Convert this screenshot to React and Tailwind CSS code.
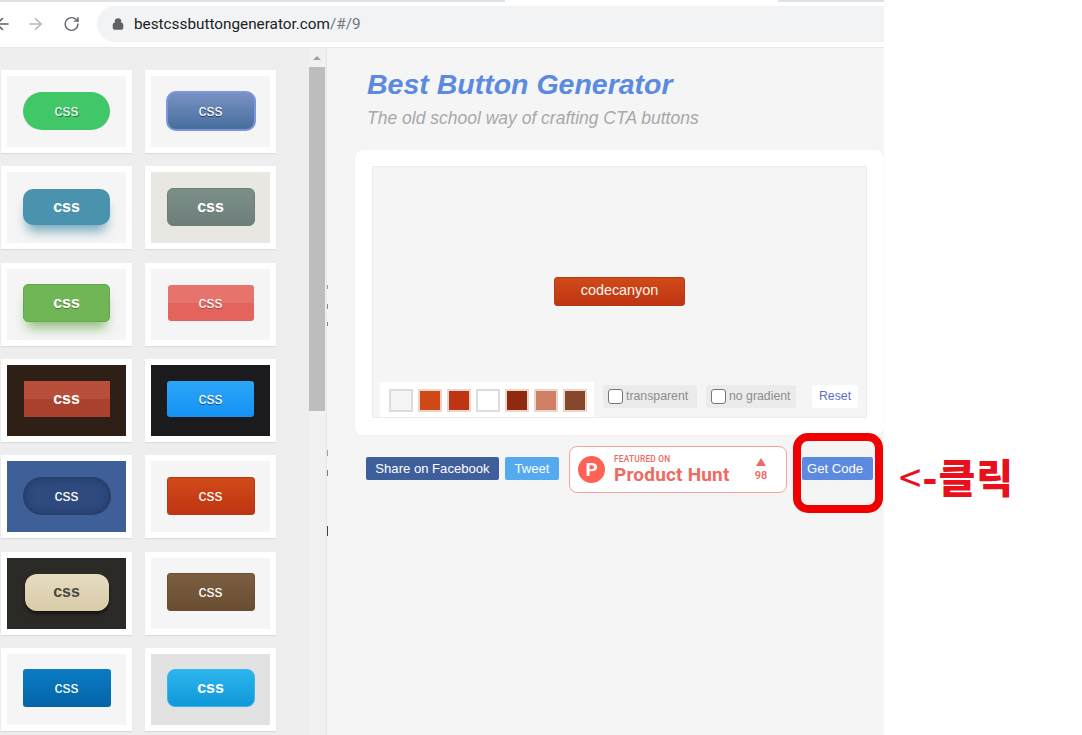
import { ArrowLeft, ArrowRight, RotateCw, Lock } from "lucide-react";

const presets = [
  { bg: "bg-[#f5f5f5]", btn: "w-[87px] h-[38px] rounded-[19px] bg-[#41c768]", text: "text-[#f4fff6] [text-shadow:1px_1px_0_#1e7a3c]" },
  { bg: "bg-[#f5f5f5]", btn: "w-[90px] h-[40px] rounded-[10px] border-2 border-[#7f93de] bg-linear-to-b from-[#7892c2] to-[#476e9e]", text: "text-white [text-shadow:0_1px_0_#283966]" },
  { bg: "bg-[#f5f5f5]", btn: "w-[87px] h-[36px] rounded-[10px] bg-[#4a93ae] shadow-[0_10px_12px_-4px_rgba(45,125,155,0.65)]", text: "font-bold text-white" },
  { bg: "bg-[#e9e7e1]", btn: "w-[88px] h-[38px] rounded-[6px] border border-[#6c7f79] bg-linear-to-b from-[#7b8f89] to-[#6e7f7b]", text: "font-bold text-white" },
  { bg: "bg-[#f5f5f5]", btn: "w-[87px] h-[38px] rounded-[5px] border border-[#63a84e] bg-[#71b656] shadow-[0_10px_12px_-4px_rgba(90,160,60,0.65)]", text: "font-bold text-white [text-shadow:0_1px_0_#4a7d34]" },
  { bg: "bg-[#f5f5f5]", btn: "w-[86px] h-[36px] rounded-[3px] bg-linear-to-b from-[#e6736c] from-50% to-[#e3645d] to-50%", text: "text-white [text-shadow:0_1px_0_#a8433d]" },
  { bg: "bg-[#2e2017]", btn: "w-[86px] h-[36px] bg-linear-to-b from-[#b84f3b] from-50% to-[#a9412c] to-50%", text: "font-bold text-white" },
  { bg: "bg-[#1b1b1d]", btn: "w-[87px] h-[36px] rounded-[3px] bg-linear-to-b from-[#2ba6f7] to-[#1492f5]", text: "text-white [text-shadow:0_1px_0_#0a4f8a]" },
  { bg: "bg-[#3e5f97]", btn: "w-[88px] h-[38px] rounded-[19px] bg-[#2f4a7e] shadow-[inset_0_0_10px_rgba(20,35,70,0.6)]", text: "text-white" },
  { bg: "bg-[#f5f5f5]", btn: "w-[88px] h-[38px] rounded-[3px] border border-[#b93a14] bg-linear-to-b from-[#d04a18] to-[#bf3412]", text: "text-white" },
  { bg: "bg-[#2b2a26]", btn: "w-[84px] h-[37px] rounded-[12px] bg-linear-to-b from-[#e6dcc0] to-[#d8cba8] shadow-[0_3px_3px_rgba(0,0,0,0.5)]", text: "font-bold text-[#4a4a42]" },
  { bg: "bg-[#f5f5f5]", btn: "w-[88px] h-[38px] rounded-[3px] border border-[#6b4f35] bg-linear-to-b from-[#7c5e40] to-[#6a4e33]", text: "text-white" },
  { bg: "bg-[#f5f5f5]", btn: "w-[88px] h-[38px] rounded-[3px] bg-linear-to-b from-[#0a7cc4] to-[#0464a8]", text: "text-white" },
  { bg: "bg-[#e2e2e2]", btn: "w-[88px] h-[38px] rounded-[8px] border border-[#3ab6ea] bg-linear-to-b from-[#2cb5ee] to-[#0e98d8]", text: "font-bold text-white" },
];

const swatches = [
  "bg-[#f5f5f5] border-[#dcdcdc]",
  "bg-[#d04a18] border-[#ecd5cb]",
  "bg-[#bf3412] border-[#ecd5cb]",
  "bg-white border-[#dcdcdc]",
  "bg-[#8f2a10] border-[#ecd5cb]",
  "bg-[#cf7f66] border-[#ecd5cb]",
  "bg-[#87472c] border-[#ecd5cb]",
];

function Toolbar() {
  return (
    <div className="h-[47px] bg-white shrink-0 flex flex-col">
      {/* edge of the tab strip, the active tab leaves a gap */}
      <div className="h-[2px] flex shrink-0">
        <div className="w-[505px] bg-[#dfe1e5]" />
        <div className="w-[273px]" />
        <div className="flex-1 bg-[#dfe1e5]" />
      </div>
      <div className="flex items-center pt-[4px] h-[40px]">
        <div className="flex items-center w-[87px] shrink-0 -ml-[7px] text-[#5f6368]">
          <ArrowLeft size={20} strokeWidth={2} />
          <ArrowRight size={20} strokeWidth={2} className="ml-[14px] text-[#b4b7bb]" />
          <RotateCw size={18} strokeWidth={2} className="ml-[18px]" />
        </div>
        <div className="flex-1 ml-[17px] h-[36px] rounded-l-[18px] bg-[#f1f3f4] flex items-center pl-[15px] gap-[10px]">
          <Lock size={12} strokeWidth={3} className="text-[#5f6368] fill-[#5f6368]" />
          <span className="font-['Roboto',sans-serif] text-[15.3px] text-[#202124]">
            bestcssbuttongenerator.com<span className="text-[#70757a]">/#/9</span>
          </span>
        </div>
      </div>
    </div>
  );
}

function Sidebar() {
  return (
    <div className="w-[327px] shrink-0 flex bg-[#eeeeee] border-r border-[#e8e8e8] overflow-hidden font-['Liberation_Sans',sans-serif]">
      <div className="w-[309px] shrink-0 pt-[22px] pl-[1px]">
        <div className="grid grid-cols-[131px_131px] gap-x-[13px] gap-y-[13.33px]">
          {presets.map((p, i) => (
            <div key={i} className="h-[83px] bg-white p-[6px] shadow-[0_1px_1px_rgba(0,0,0,0.08)]">
              <div className={`h-full flex items-center justify-center pb-[2px] ${p.bg}`}>
                <div className={`flex items-center justify-center ${p.btn}`}>
                  <span className={`text-[16px] leading-none ${p.text}`}>css</span>
                </div>
              </div>
            </div>
          ))}
        </div>
      </div>
      <div className="w-[16px] shrink-0 bg-[#f1f1f1] flex flex-col items-center">
        <div className="h-[19px] flex items-center justify-center">
          <div className="w-0 h-0 border-x-[4px] border-x-transparent border-b-[4px] border-b-[#a3a3a3]" />
        </div>
        <div className="w-full h-[344px] bg-[#bdbdbd]" />
      </div>
    </div>
  );
}

function ProductHunt() {
  return (
    <div className="w-[218px] h-[47px] rounded-[8px] border border-[#f4a49e] bg-white flex items-center pl-[8px] -mt-[11px] font-['Roboto',sans-serif] text-[#ee6a62]">
      <div className="w-[27px] h-[27px] rounded-full bg-[#ff6154] flex items-center justify-center text-white font-bold text-[19px] leading-none">
        P
      </div>
      <div className="ml-[9px] w-[140px] flex flex-col">
        <span className="text-[8.4px] leading-[9px] font-medium tracking-[0.2px]">FEATURED ON</span>
        <span className="text-[19px] leading-[21px] font-bold tracking-[0.2px]">Product Hunt</span>
      </div>
      <div className="flex flex-col items-center w-[14px]">
        <div className="w-0 h-0 border-x-[5px] border-x-transparent border-b-[8px] border-b-[#ee6a62]" />
        <span className="mt-[4px] text-[11px] leading-none font-semibold">98</span>
      </div>
    </div>
  );
}

function Main() {
  return (
    <div className="relative flex-1 bg-[#f5f5f5] pl-[28px] pt-[19px] font-['Liberation_Sans',sans-serif] min-w-0">
      {/* slivers of clipped page text along the panel edge */}
      <div className="absolute left-0 top-[237px] w-px h-[4px] bg-[#9a9a9a]" />
      <div className="absolute left-0 top-[256px] w-px h-[5px] bg-[#8a8a8a]" />
      <div className="absolute left-0 top-[274px] w-px h-[4px] bg-[#8a8a8a]" />
      <div className="absolute left-0 top-[402px] w-px h-[6px] bg-[#a0a0a0]" />
      <div className="absolute left-0 top-[422px] w-px h-[6px] bg-[#5f8a80]" />
      <div className="absolute left-0 top-[478px] w-px h-[10px] bg-[#444444]" />

      <h1 className="pl-[12px] text-[28.5px] leading-[34px] font-bold italic text-[#5b8ae0]">Best Button Generator</h1>
      <p className="pl-[12px] mt-[6px] text-[17.5px] leading-[22px] italic text-[#a8a8a8]">The old school way of crafting CTA buttons</p>

      <div className="mt-[21px] h-[285px] bg-white rounded-[8px] px-[17px] pt-[16px] shadow-[0_0_2px_rgba(0,0,0,0.05)]">
        <div className="h-[252px] bg-[#f5f5f5] border border-[#ececec] flex flex-col">
          <div className="flex-1 flex items-center justify-center pt-[33px]">
            <div className="w-[131px] h-[29px] rounded-[3px] border border-[#b93a14] bg-linear-to-b from-[#d04a18] to-[#bf3412] flex items-center justify-center text-[#fff5ee] text-[14.4px]">
              codecanyon
            </div>
          </div>
          <div className="flex items-center pl-[7px] h-[35px] text-[12.3px] text-[#8d8d8d]">
            <div className="w-[214px] h-[35px] bg-white flex items-center gap-[5.5px] pl-[9px] pt-[2px]">
              {swatches.map((s, i) => (
                <div key={i} className={`w-[23.5px] h-[23.5px] border-2 ${s}`} />
              ))}
            </div>
            <label className="ml-[9px] mb-[6px] w-[94px] h-[23px] rounded-[3px] bg-[#ebebeb] flex items-center pl-[5px] gap-[3px]">
              <span className="w-[15px] h-[15px] rounded-[3px] border border-[#767676] bg-white" />
              transparent
            </label>
            <label className="ml-[9px] mb-[6px] w-[90px] h-[23px] rounded-[3px] bg-[#ebebeb] flex items-center pl-[5px] gap-[3px]">
              <span className="w-[15px] h-[15px] rounded-[3px] border border-[#767676] bg-white" />
              no gradient
            </label>
            <div className="ml-[16px] mb-[6px] w-[46px] h-[23px] rounded-[3px] bg-white flex items-center justify-center text-[#5b6fd0]">Reset</div>
          </div>
        </div>
      </div>

      <div className="mt-[22px] pl-[11px] flex items-start text-[13.1px] text-white">
        <div className="w-[133px] h-[23px] rounded-[2px] bg-[#3f5e9c] flex items-center justify-center">Share on Facebook</div>
        <div className="ml-[6px] w-[54px] h-[23px] rounded-[2px] bg-[#55a9ee] flex items-center justify-center">Tweet</div>
        <div className="ml-[10px]"><ProductHunt /></div>
        <div className="ml-[15px] w-[71px] h-[23px] rounded-[2px] bg-[#5b8ae0] flex items-center justify-center pr-[5px]">Get Code</div>
      </div>
    </div>
  );
}

export default function App() {
  return (
    <div className="relative w-[1082px] h-[735px] overflow-hidden bg-white">
      <div className="w-[884px] h-full flex flex-col">
        <Toolbar />
        <div className="flex-1 flex min-h-0 border-t border-[#e8e8e8]">
          <Sidebar />
          <Main />
        </div>
      </div>
      {/* annotation drawn on top of the screenshot */}
      <div className="absolute left-[793px] top-[433px] w-[90px] h-[80px] rounded-[15px] border-[8px] border-[#f00000]" />
      <div className="absolute left-[899px] top-[451px] font-['Noto_Sans_CJK_KR',sans-serif] font-black text-[40px] leading-[50px] tracking-[1px] text-[#e8101c] whitespace-nowrap">
        <span className="font-normal">&lt;</span>-클릭
      </div>
    </div>
  );
}
